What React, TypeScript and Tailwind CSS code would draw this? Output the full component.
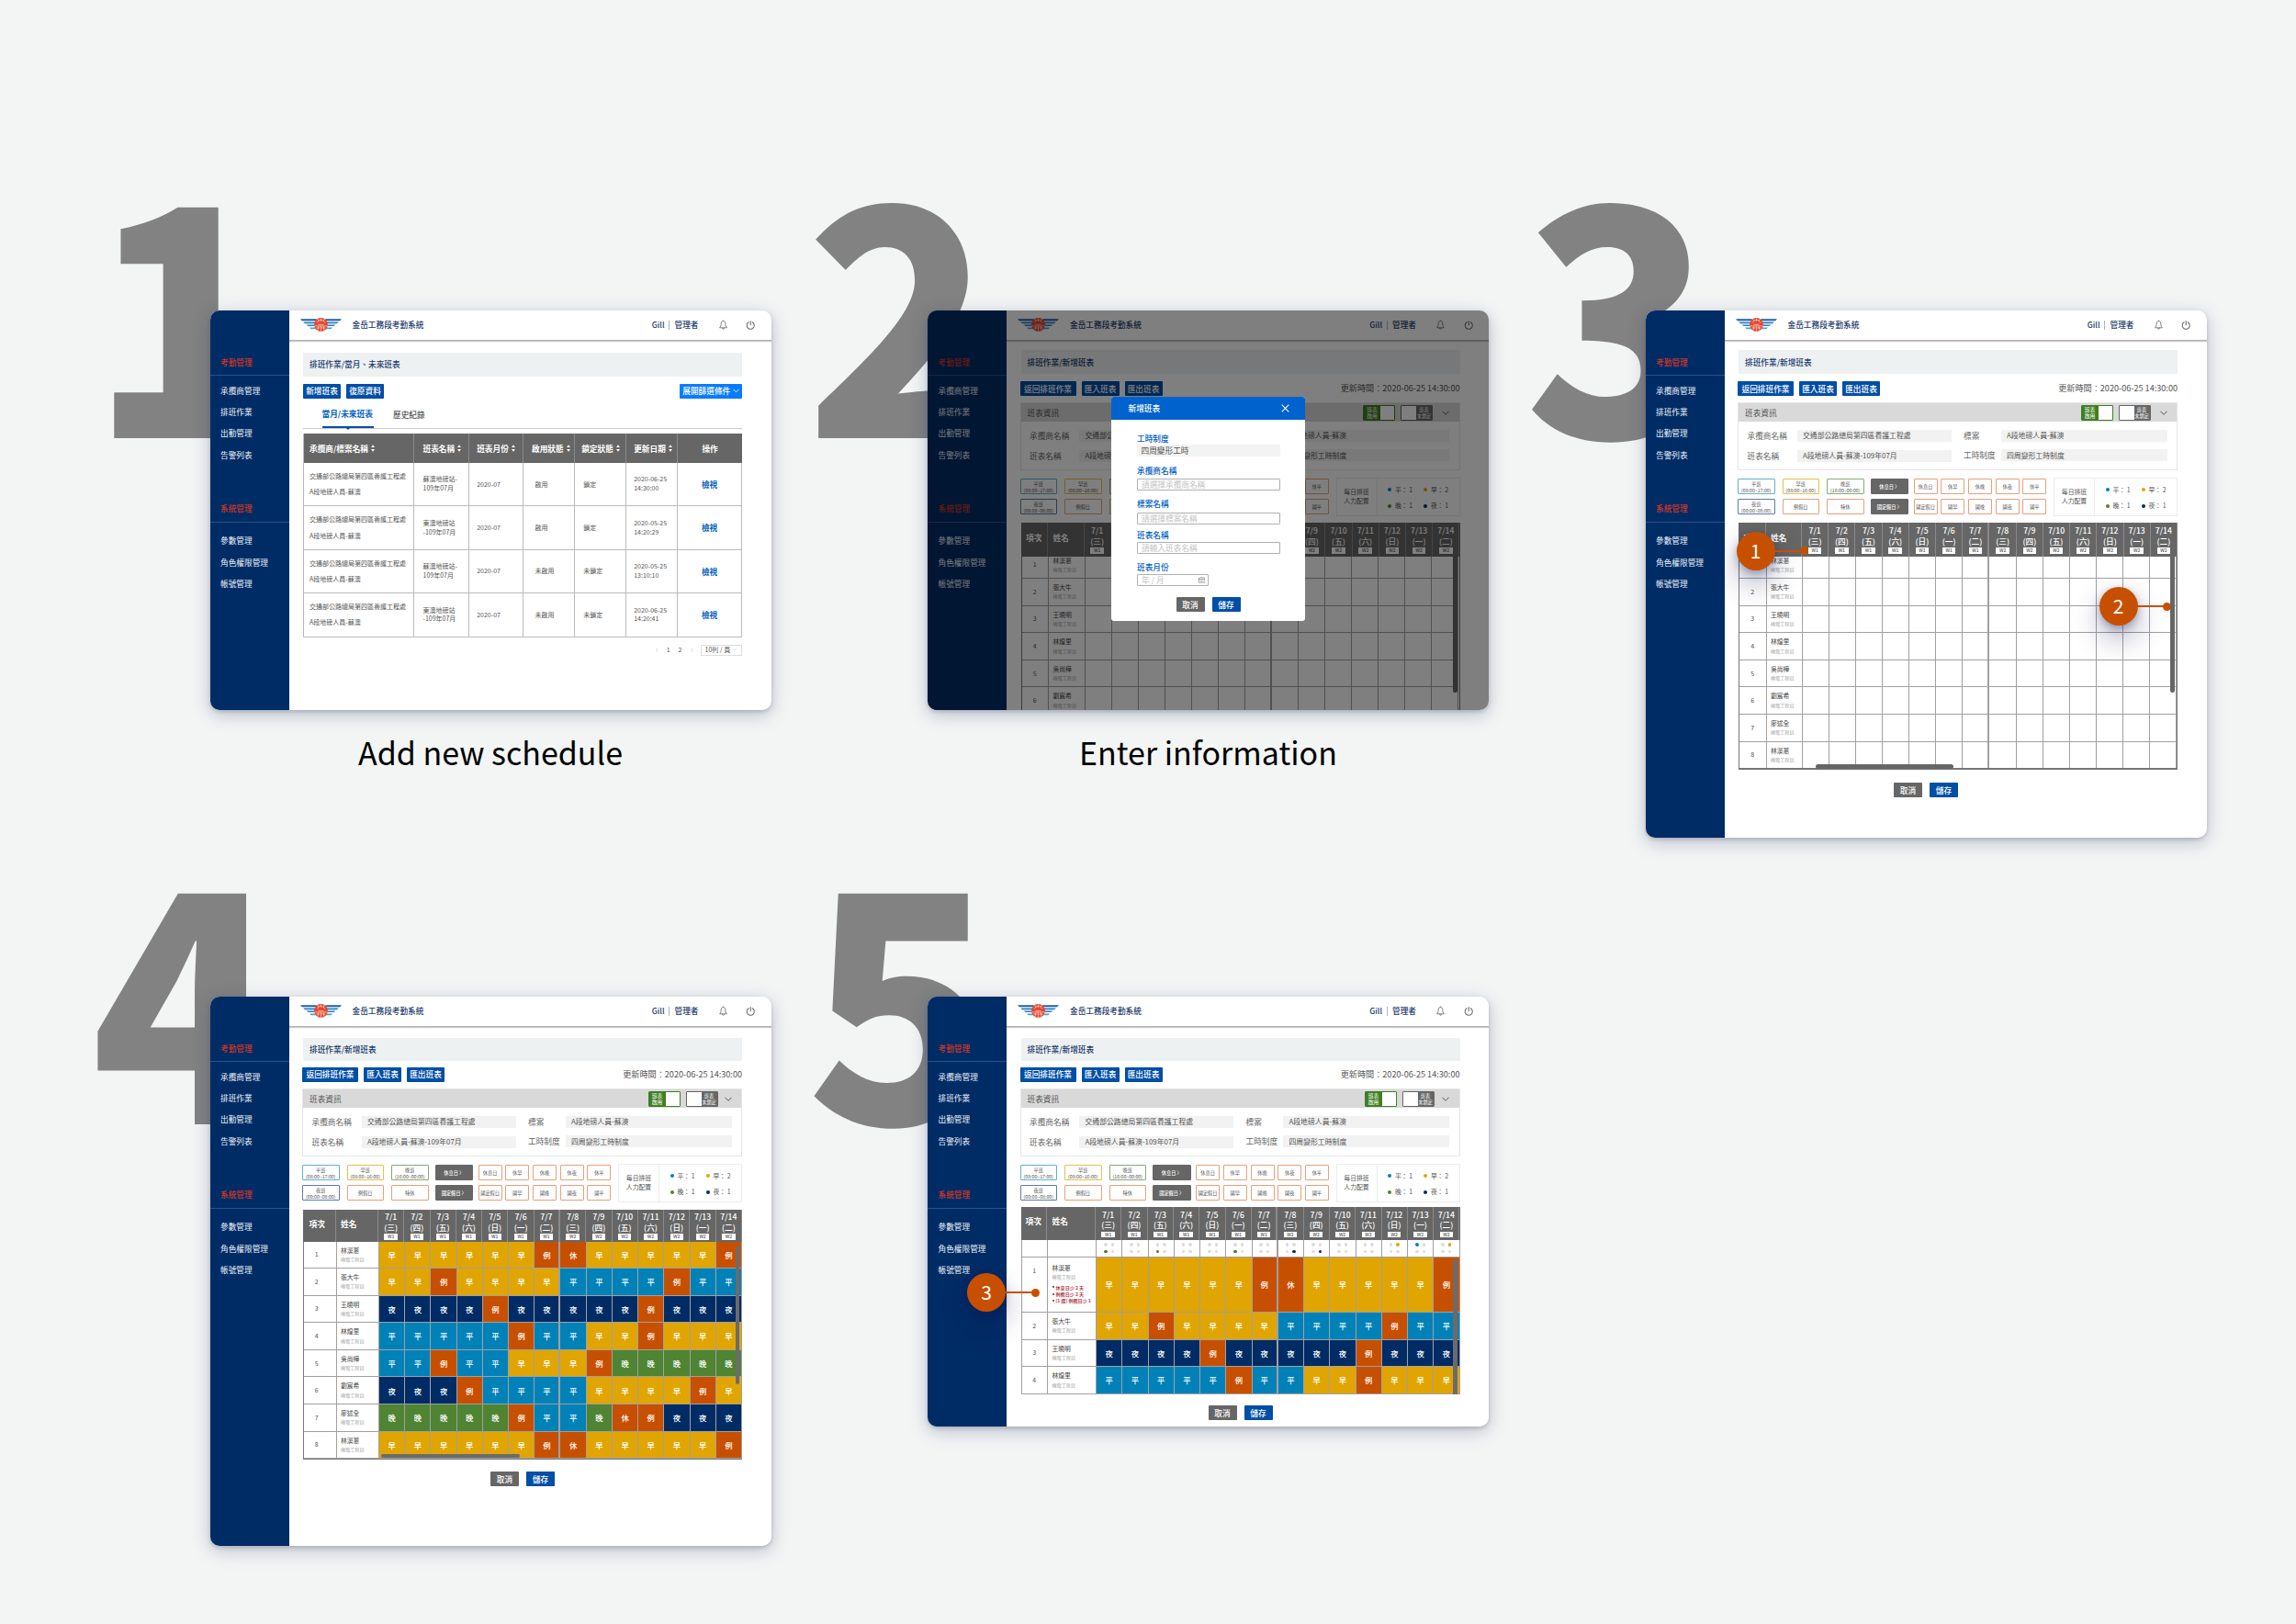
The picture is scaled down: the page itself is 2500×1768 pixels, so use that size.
import type { ReactNode } from "react";

const WEEK = ["三", "四", "五", "六", "日", "一", "二"];
const DAYS = Array.from({ length: 14 }, (_, i) => ({
  date: `7/${i + 1}`,
  day: `(${WEEK[i % 7]})`,
  week: i < 7 ? "W1" : "W2",
}));

const STAFF = ["林溪蔥", "張大牛", "王曉明", "林煌里", "吳尚樺", "劉宸希", "廖述全", "林溪蔥"];

const SHIFTS = [
  "早早早早早早例休早早早早早例",
  "早早例早早早早平平平平例平平",
  "夜夜夜夜例夜夜夜夜夜例夜夜夜",
  "平平平平平例平平早早例早早早",
  "平平例平平早早早例晚晚晚晚晚",
  "夜夜夜例平平平平早早早早例早",
  "晚晚晚晚晚例平平晚休例夜夜夜",
  "早早早早早早例休早早早早早例",
];

const SHIFT_BG: Record<string, string> = {
  早: "bg-[#e0a500]",
  例: "bg-[#c75000]",
  休: "bg-[#c75000]",
  平: "bg-[#0082b8]",
  夜: "bg-[#002c66]",
  晚: "bg-[#4f8432]",
};

/* ---------- icons ---------- */

function Logo() {
  return (
    <svg viewBox="0 0 45 15" className="h-[15px] w-[45px] shrink-0">
      <g fill="#1b5fa9">
        <path d="M0 1.300h18l-1 1.900H1.900z" />
        <path d="M45 1.300H27l1 1.900h15.100z" />
      </g>
      <g fill="#2a7cc4">
        <path d="M3.200 4.500h14l-.4 1.700H5z" />
        <path d="M41.800 4.500h-14l.4 1.700H40z" />
        <path d="M6.600 7.500h10l.3 1.600H8.500z" />
        <path d="M38.400 7.500h-10l-.3 1.600h8.400z" />
      </g>
      <g fill="#45a5e0">
        <path d="M10 10.400h7l1.300 1.900h-6.800z" />
        <path d="M35 10.400h-7l-1.300 1.900h6.800z" />
      </g>
      <circle cx="22.500" cy="7.400" r="7.400" fill="#e5472c" />
      <g stroke="#fff" strokeWidth=".55" fill="none">
        <path d="M18.200 5.500a4.500 4.500 0 0 1 8.600 0M22.500.5v3.300M18.800 1.400l1.100 1.800M26.200 1.400l-1.100 1.800" />
        <path d="M19.500 7.300h6M15.300 8.900h14.400M17.500 11h4.300M23.200 11h4.300M22.500 9v5.500M19.800 9.200l-.8 4.800M25.200 9.200l.8 4.800" />
      </g>
    </svg>
  );
}

function Bell() {
  return (
    <svg viewBox="0 0 18 22" className="h-[11px] w-[9px] shrink-0" fill="none" stroke="#6a6a6a" strokeWidth="1.700">
      <path d="M9 1.200v2M9 3c-3 0-4.600 2.300-4.600 5.200 0 5-1 6.800-3.200 9.400h15.600c-2.200-2.600-3.200-4.400-3.200-9.400C13.600 5.300 12 3 9 3z" />
      <path d="M7 18c0 3.500 4 3.500 4 0" />
    </svg>
  );
}

function Power() {
  return (
    <svg viewBox="0 0 20 20" className="h-[10.500px] w-[10.500px] shrink-0" fill="none" stroke="#6a6a6a" strokeWidth="2" strokeLinecap="round">
      <path d="M10 1.200v8" />
      <path d="M6 3.300a7.700 7.700 0 1 0 8 0" />
    </svg>
  );
}

function Chevron({ className }: { className: string }) {
  return (
    <svg viewBox="0 0 16 10" className={className} fill="none" stroke="currentColor" strokeWidth="2">
      <path d="M1 1.500l7 7 7-7" />
    </svg>
  );
}

function Sort() {
  return (
    <svg viewBox="0 0 8 16" className="ml-[3px] h-2 w-1 shrink-0" fill="#fff">
      <path d="M4 .5l4 5.500H0zM4 15.500L0 10h8z" />
    </svg>
  );
}

/* ---------- shared chrome ---------- */

function NavHeading({ children, className }: { children: ReactNode; className: string }) {
  return (
    <div className={`flex items-center border-b border-[#2b5288] pl-[11.500px] font-medium text-[#d3341f] ${className}`}>
      {children}
    </div>
  );
}

function NavItem({ children }: { children: ReactNode }) {
  return <a className="flex h-[23.200px] items-center pl-[11.500px] text-[#eef2f8]">{children}</a>;
}

function Sidebar() {
  return (
    <nav className="w-[86px] shrink-0 bg-[#002c66] pt-[42.500px]">
      <NavHeading className="h-[28.500px]">考勤管理</NavHeading>
      <div className="mt-[4.700px]">
        <NavItem>承攬商管理</NavItem>
        <NavItem>排班作業</NavItem>
        <NavItem>出勤管理</NavItem>
        <NavItem>告警列表</NavItem>
      </div>
      <NavHeading className="mt-[31.300px] h-[31.500px]">系統管理</NavHeading>
      <div className="mt-[8px]">
        <NavItem>參數管理</NavItem>
        <NavItem>角色權限管理</NavItem>
        <NavItem>帳號管理</NavItem>
      </div>
    </nav>
  );
}

function Screen({ children, className }: { children: ReactNode; className: string }) {
  return (
    <div
      className={`relative flex w-[611px] overflow-hidden rounded-[10px] bg-white text-[8.670px] leading-none text-[#555] shadow-[0_5px_20px_rgba(40,50,90,0.28),0_2px_4px_rgba(40,50,90,0.2)] ${className}`}
    >
      <Sidebar />
      <div className="flex min-w-0 flex-1 flex-col">
        <header className="flex h-[32.500px] shrink-0 items-center border-b border-[#b4b4b4] pr-[17px] pl-3 font-medium text-[#1b3a6b] shadow-[0_1px_1px_rgba(0,0,0,0.22)]">
          <Logo />
          <span className="ml-3">金岳工務段考勤系統</span>
          <span className="ml-auto">Gill</span>
          <span className="mr-[5.500px] ml-[4.500px] h-2.5 w-px bg-[#aab4c4]" />
          <span>管理者</span>
          <span className="ml-[22px] flex">
            <Bell />
          </span>
          <span className="ml-[20.500px] flex">
            <Power />
          </span>
        </header>
        <div className="ml-[15.500px] w-[478px]">{children}</div>
      </div>
    </div>
  );
}

function Crumb({ children, className }: { children: ReactNode; className: string }) {
  return (
    <div className={`flex items-center bg-[#eef1f2] pl-[7px] font-medium text-[#1b3a6b] ${className}`}>{children}</div>
  );
}

function Btn({ children, className }: { children: ReactNode; className: string }) {
  return (
    <button className={`flex h-4 items-center justify-center rounded-[1px] font-medium text-white ${className}`}>
      {children}
    </button>
  );
}

function FormButtons({ className }: { className: string }) {
  return (
    <div className={`flex gap-[8px] ${className}`}>
      <Btn className="w-[31px] bg-[#666]">取消</Btn>
      <Btn className="w-[31px] bg-[#004ea6]">儲存</Btn>
    </div>
  );
}

/* ---------- schedule editor ---------- */

function Field({ label, value, className }: { label: string; value: string; className: string }) {
  return (
    <div className={`grid items-center ${className}`}>
      <span className="text-[#666]">{label}</span>
      <span className="flex h-[13px] items-center bg-[#f2f2f2] pl-[6.500px] text-[7.850px]">{value}</span>
    </div>
  );
}

function InfoPanel({ toggles }: { toggles: string }) {
  return (
    <section className="h-[74px] border border-[#e6e6e6]">
      <div className="flex h-5 items-center justify-between bg-[#d9d9d9] pr-[10.500px] pl-[7px]">
        <span>班表資訊</span>
        <div className={`ml-auto flex ${toggles}`}>
          <div className="flex h-[17px] w-[35px] overflow-hidden rounded-[1px] border border-[#3f7f22] bg-white">
            <span className="w-[18px] bg-[#3f7f22] text-center text-[5.800px] leading-[7.500px] text-white">
              班表
              <br />
              啟用
            </span>
          </div>
          <div className="ml-[6px] flex h-[17px] w-[35px] overflow-hidden rounded-[1px] border border-[#666] bg-white">
            <span className="ml-auto w-[17px] bg-[#666] text-center text-[5.200px] leading-[7.500px] text-white">
              班表
              <br />
              未鎖定
            </span>
          </div>
        </div>
        <Chevron className="h-[5px] w-2" />
      </div>
      <div className="flex pt-[7.500px] pl-[9.500px]">
        <div className="w-[235.500px]">
          <Field className="h-[15px] grid-cols-[54px_168px]" label="承攬商名稱" value="交通部公路總局第四區養護工程處" />
          <Field className="mt-[7px] h-[15px] grid-cols-[54px_168px]" label="班表名稱" value="A段地磅人員-蘇澳-109年07月" />
        </div>
        <div>
          <Field className="h-[15px] grid-cols-[40.500px_181px]" label="標案" value="A段地磅人員-蘇澳" />
          <Field className="mt-[6.500px] h-[15px] grid-cols-[40.500px_181px]" label="工時制度" value="四周變形工時制度" />
        </div>
      </div>
    </section>
  );
}

function Chip({ children, className }: { children: ReactNode; className: string }) {
  return (
    <div
      className={`flex items-center justify-center rounded-[1px] border bg-white text-center text-[5.200px] leading-[7px] whitespace-nowrap ${className}`}
    >
      {children}
    </div>
  );
}

function Count({ dot, label }: { dot: string; label: string }) {
  return (
    <span className="flex items-center gap-[4px] whitespace-pre">
      <i className={`size-[4px] rounded-full ${dot}`} />
      {label}
    </span>
  );
}

function ShiftPalette() {
  const orange = "border-[#e6a07c]";
  return (
    <section className="flex h-[42px] justify-between">
      <div className="grid grid-cols-[40.500px_40.500px_40.500px_40.500px] grid-rows-[17px_17px] gap-x-[8px] gap-y-[5px] pt-px">
        <Chip className="border-[#5fb0d0]">平班<br />(08:00~17:00)</Chip>
        <Chip className="border-[#e6c04a]">早班<br />(08:00~16:00)</Chip>
        <Chip className="border-[#84ac70]">晚班<br />(16:00~00:00)</Chip>
        <Chip className="ml-[-1px] border-[#666] bg-[#666]! font-medium text-white">休息日 〉</Chip>
        <Chip className="border-[#5b7aa8]">夜班<br />(00:00~08:00)</Chip>
        <Chip className={orange}>例假日</Chip>
        <Chip className={orange}>特休</Chip>
        <Chip className="ml-[-1px] border-[#666] bg-[#666]! font-medium text-white">國定假日 〉</Chip>
      </div>
      <div className="-ml-[2px] grid grid-cols-[26px_26px_26px_26px_26px] grid-rows-[17.500px_17.500px] gap-x-[3.700px] gap-y-[4.500px] pt-[.5px]">
        {["休息日", "休早", "休晚", "休夜", "休平", "國定假日", "國早", "國晚", "國夜", "國平"].map((t) => (
          <Chip key={t} className={orange}>
            {t}
          </Chip>
        ))}
      </div>
      <div className="flex w-[135px] border border-[#ececec] text-[6.850px]">
        <div className="flex w-[44px] flex-col items-center justify-center border-r border-[#ececec] leading-[9.800px]">
          <span>每日排班</span>
          <span>人力配置</span>
        </div>
        <div className="grid flex-1 grid-cols-[39px_1fr] grid-rows-[17.500px_17.500px] pt-[3.500px] pl-[11.500px]">
          <Count dot="bg-[#0082b8]" label="平： 1" />
          <Count dot="bg-[#e0a500]" label="早： 2" />
          <Count dot="bg-[#4f8432]" label="晚： 1" />
          <Count dot="bg-[#002c66]" label="夜： 1" />
        </div>
      </div>
    </section>
  );
}

const line = (i: number) => (i === 6 ? "border-r-2" : "border-r");

function TableHead({ cols, className, indexPad = "" }: { cols: string; className: string; indexPad?: string }) {
  return (
    <div className={`relative z-10 grid bg-[#666] font-medium text-white ${cols} ${className}`}>
      <div className={`flex items-center justify-center border-r border-[#8a8a8a] pb-1 font-bold ${indexPad}`}>項次</div>
      <div className="flex items-center border-r border-[#8a8a8a] pb-1 pl-[5.500px] font-bold">姓名</div>
      {DAYS.map((d, i) => (
        <div key={d.date} className={`flex flex-col items-center justify-center border-[#8a8a8a] ${line(i)}`}>
          <span className="h-[11.500px] leading-[11.500px]">{d.date}</span>
          <span className="h-[10.500px] leading-[10.500px]">{d.day}</span>
          <span className="mt-[2px] h-[6.500px] w-[14.500px] bg-white text-center text-[5px] leading-[6.500px] text-[#555]">
            {d.week}
          </span>
        </div>
      ))}
    </div>
  );
}

function StaffRow({
  index,
  cols,
  filled,
  className = "h-[29.600px]",
  indexPad = "",
  warnings,
}: {
  index: number;
  cols: string;
  filled: boolean;
  className?: string;
  indexPad?: string;
  warnings?: string[];
}) {
  return (
    <div className={`grid ${cols} ${className}`}>
      <div
        className={`flex justify-center border-r border-b border-[#a0a0a0] text-[7px] ${indexPad} ${warnings ? "pt-[11px]" : "items-center"}`}
      >
        {index + 1}
      </div>
      <div
        className={`flex flex-col border-r border-b border-[#a0a0a0] pl-[4.500px] whitespace-nowrap ${warnings ? "pt-[7px]" : "justify-center"}`}
      >
        <span className="text-[6.800px] leading-[9.300px] text-[#444]">{STAFF[index]}</span>
        <span className="text-[5.100px] leading-[9.300px] text-[#aaa]">機電工程員</span>
        {warnings && (
          <ul className="mt-[3.500px] text-[5.100px] leading-[7.300px] font-medium text-[#a3121f]">
            {warnings.map((w) => (
              <li key={w} className="flex items-center gap-[2px]">
                <i className="size-[2px] rounded-full bg-[#a3121f]" />
                {w}
              </li>
            ))}
          </ul>
        )}
      </div>
      {[...SHIFTS[index]].map((s, i) => (
        <div
          key={i}
          className={`flex items-center justify-center border-b border-[#a0a0a0] text-[8.300px] font-medium text-white ${line(i)} ${filled ? SHIFT_BG[s] : ""}`}
        >
          {filled ? s : ""}
        </div>
      ))}
    </div>
  );
}

/* Headcount markers shown under each date: positions run left-right, top-bottom. */
const MARKS: Record<number, [number, string]> = {
  0: [2, "bg-[#3f7f22]"],
  2: [2, "bg-[#3f7f22]"],
  5: [2, "bg-[#3f7f22]"],
  7: [3, "bg-[#002c66]"],
  8: [3, "bg-[#002c66]"],
  11: [1, "bg-[#e0a500]"],
  12: [0, "bg-[#0082b8]"],
  13: [1, "bg-[#e0a500]"],
};

function HeadcountRow({ cols }: { cols: string }) {
  return (
    <div className={`grid h-[19px] ${cols}`}>
      <div className="border-r border-b border-[#a0a0a0]" />
      <div className="border-r border-b border-[#a0a0a0]" />
      {DAYS.map((d, i) => (
        <div
          key={d.date}
          className={`grid grid-cols-[3.600px_3.600px] content-center justify-center gap-[4px] border-b border-[#a0a0a0] ${line(i)}`}
        >
          {[0, 1, 2, 3].map((k) => (
            <i
              key={k}
              className={`size-[3.600px] rounded-full ${MARKS[i] && MARKS[i][0] === k ? MARKS[i][1] : "bg-[#dcdcdc]"}`}
            />
          ))}
        </div>
      ))}
    </div>
  );
}

function EditorTop({
  crumb,
  toolbar,
  gap,
  toggles = "mr-[10px]",
}: {
  crumb: string;
  toolbar: string;
  gap: string;
  toggles?: string;
}) {
  return (
    <>
      <Crumb className={crumb}>排班作業/新增班表</Crumb>
      <div className={`flex h-4 items-center gap-[6px] ${toolbar}`}>
        <Btn className="-ml-px w-[61px] bg-[#004ea6]">返回排班作業</Btn>
        <Btn className="w-[41px] bg-[#004ea6]">匯入班表</Btn>
        <Btn className="w-[41px] bg-[#004ea6]">匯出班表</Btn>
        <span className="ml-auto text-[9.120px]">更新時間：2020-06-25 14:30:00</span>
      </div>
      <div className={`-ml-px w-[479px] ${gap}`}>
        <InfoPanel toggles={toggles} />
        <div className="h-2" />
        <ShiftPalette />
      </div>
    </>
  );
}

const EMPTY_COLS = "grid-cols-[29.500px_39.500px_repeat(14,minmax(0,1fr))]";
const FULL_COLS = "grid-cols-[35.500px_46.500px_repeat(14,minmax(0,1fr))]";
const WARN_COLS = "grid-cols-[28.500px_53px_repeat(14,minmax(0,1fr))]";

function EmptyEditor({ children, className }: { children?: ReactNode; className: string }) {
  return (
    <Screen className={className}>
      <EditorTop crumb="mt-[10.500px] h-[26px]" toolbar="mt-2" gap="mt-[7px]" />
      <div className="relative mt-[7px] h-[269px]">
        <TableHead cols={EMPTY_COLS} className="h-[36.500px]" />
        <div className="h-[232.500px] overflow-hidden border-x border-b-2 border-[#777]">
          <div className="-mt-[5px]">
            {STAFF.map((_, i) => (
              <StaffRow key={i} index={i} cols={EMPTY_COLS} filled={false} />
            ))}
          </div>
        </div>
        <div className="absolute top-[36.500px] right-[3px] h-[148px] w-[5px] rounded-b-full bg-[#666]" />
        <div className="absolute top-[263px] left-[84px] h-[5px] w-[150px] rounded-full bg-[#666]" />
      </div>
      <FormButtons className="mt-[14px] ml-[169px]" />
      {children}
    </Screen>
  );
}

/* ---------- screen 1: list ---------- */

const LIST_ROWS = [
  ["蘇澳地磅站-", "109年07月", "啟用", "鎖定", "2020-06-25", "14:30:00"],
  ["東澳地磅站", "-109年07月", "啟用", "鎖定", "2020-05-25", "14:20:29"],
  ["蘇澳地磅站-", "109年07月", "未啟用", "未鎖定", "2020-05-25", "13:10:10"],
  ["東澳地磅站", "-109年07月", "未啟用", "未鎖定", "2020-06-25", "14:20:41"],
];

const LIST_COLS = "grid-cols-[119.500px_60.700px_58.800px_56.200px_56px_56px_1fr]";

function ListScreen() {
  const cell = "flex flex-col justify-center border-r border-b border-[#bbb]";
  const head = "flex items-center border-r border-[#8a8a8a]";
  return (
    <Screen className="h-[435px]">
      <Crumb className="mt-[13.500px] h-[25.500px]">排班作業/當月、未來班表</Crumb>
      <div className="mt-[8px] flex gap-[6px]">
        <Btn className="w-[41px] bg-[#004ea6]">新增班表</Btn>
        <Btn className="w-[41px] bg-[#004ea6]">復原資料</Btn>
        <Btn className="ml-auto w-[68px] gap-[2.500px] bg-[#087cff]">
          展開篩選條件
          <Chevron className="h-[4.500px] w-[7px]" />
        </Btn>
      </div>
      <div className="mt-[8px] flex h-[25px] gap-[21px] border-b border-[#ccc] pl-[20.500px]">
        <div className="relative flex w-[56.500px] items-center border-b-2 border-[#004ea6] pb-1 font-bold text-[#0060c0]">
          當月/未來班表
          <span className="absolute top-[23.500px] left-[25px] h-0 w-0 border-x-[3px] border-t-[3px] border-x-transparent border-t-[#004ea6]" />
        </div>
        <div className="flex items-center pb-[5px] font-medium">歷史紀錄</div>
      </div>
      <div className="mt-[5.500px] border-l border-[#bbb]">
        <div className={`grid h-[32px] bg-[#666] font-bold text-white ${LIST_COLS}`}>
          <div className={`${head} pl-[6px]`}>承攬商/標案名稱<Sort /></div>
          <div className={`${head} pl-[10px]`}>班表名稱<Sort /></div>
          <div className={`${head} pl-[8px]`}>班表月份<Sort /></div>
          <div className={`${head} pl-[9px]`}>啟用狀態<Sort /></div>
          <div className={`${head} pl-[7px]`}>鎖定狀態<Sort /></div>
          <div className={`${head} pl-[8px]`}>更新日期<Sort /></div>
          <div className="flex items-center justify-center">操作</div>
        </div>
        {LIST_ROWS.map((r, i) => (
          <div key={i} className={`grid h-[47.400px] text-[7px] ${LIST_COLS}`}>
            <div className={`${cell} pl-[6px] leading-[17.300px]`}>
              <span>交通部公路總局第四區養護工程處</span>
              <span>A段地磅人員-蘇澳</span>
            </div>
            <div className={`${cell} pl-[10px] leading-[9.800px] whitespace-nowrap`}>
              <span>{r[0]}</span>
              <span>{r[1]}</span>
            </div>
            <div className={`${cell} pl-[8px]`}>2020-07</div>
            <div className={`${cell} pl-[12.500px]`}>{r[2]}</div>
            <div className={`${cell} pl-[9px]`}>{r[3]}</div>
            <div className={`${cell} pl-[8px] leading-[9.800px]`}>
              <span>{r[4]}</span>
              <span>{r[5]}</span>
            </div>
            <div className={`${cell} items-center text-[8.670px] font-bold text-[#0060c0]`}>檢視</div>
          </div>
        ))}
      </div>
      <div className="mt-[8px] flex h-[12px] items-center justify-end text-[7px]">
        <Chevron className="mr-[8px] h-[3px] w-[5px] rotate-90 text-[#bbb]" />
        <span>1</span>
        <span className="ml-[9px]">2</span>
        <Chevron className="mr-[7px] ml-[8px] h-[3px] w-[5px] -rotate-90 text-[#bbb]" />
        <span className="flex h-full w-[45.500px] items-center gap-[3px] border border-[#ddd] pl-[4px] whitespace-nowrap">
          10列 / 頁
          <Chevron className="h-[2.500px] w-[4px] text-[#bbb]" />
        </span>
      </div>
    </Screen>
  );
}

/* ---------- screen 2: dialog ---------- */

function DialogField({ label, placeholder, className }: { label: string; placeholder: string; className: string }) {
  return (
    <label className={`flex flex-col ${className}`}>
      <span className="font-medium text-[#0060c0]">{label}</span>
      <span className="mt-auto flex h-[13px] items-center rounded-[1px] border border-[#b0b0b0] pl-[4px] text-[#c4c4c4]">
        {placeholder}
      </span>
    </label>
  );
}

function Dialog() {
  return (
    <div className="absolute inset-0 z-20 bg-black/50">
      <div className="absolute top-[94px] left-[200px] h-[244px] w-[210.500px] overflow-hidden rounded-[3px] bg-white">
        <div className="flex h-[25px] items-center justify-between bg-[#0062cc] pr-[17px] pl-[18.500px] font-medium text-white">
          新增班表
          <svg viewBox="0 0 10 10" className="size-[9px]" stroke="#fff" strokeWidth="1.200">
            <path d="M.8.8l8.400 8.400M9.200.8L.8 9.200" />
          </svg>
        </div>
        <div className="ml-[28px] w-[156px]">
          <div className="pt-[15.500px] font-medium text-[#0060c0]">工時制度</div>
          <div className="mt-[3px] flex h-[12.500px] items-center bg-[#f3f3f3] pl-[4.500px]">四周變形工時</div>
          <DialogField className="mt-[11.500px] h-[26px]" label="承攬商名稱" placeholder="請選擇承攬商名稱" />
          <DialogField className="mt-[9.500px] h-[27.500px]" label="標案名稱" placeholder="請選擇標案名稱" />
          <DialogField className="mt-[7px] h-[25px]" label="班表名稱" placeholder="請輸入班表名稱" />
          <div className="mt-[10px] font-medium text-[#0060c0]">班表月份</div>
          <div className="mt-[3px] flex h-[13px] w-[78px] items-center justify-between rounded-[1px] border border-[#b0b0b0] pr-[3px] pl-[4px] text-[#c4c4c4]">
            年 / 月
            <svg viewBox="0 0 14 14" className="size-[7.500px]" fill="none" stroke="#777" strokeWidth="1.300">
              <rect x="1" y="1.500" width="12" height="11.500" rx="2" />
              <path d="M1 4.800h12M4 8h1.500M6.300 8h1.500M8.600 8h1.500M4 10.300h1.500M6.300 10.300h1.500M8.600 10.300h1.500" />
            </svg>
          </div>
        </div>
        <FormButtons className="mt-[12px] ml-[70.500px]" />
      </div>
    </div>
  );
}

/* ---------- screens 4 and 5 ---------- */

function FilledEditor() {
  return (
    <Screen className="h-[598px]">
      <EditorTop crumb="mt-[12px] h-[25px]" toolbar="mt-[7px]" gap="mt-[7.500px]" toggles="mr-[7px]" />
      <div className="relative mt-[8px]">
        <TableHead cols={FULL_COLS} className="h-[34.500px]" indexPad="pr-[4px]" />
        <div className="h-[237px] overflow-hidden border-b border-l border-[#777]">
          {STAFF.map((_, i) => (
            <StaffRow key={i} index={i} cols={FULL_COLS} filled indexPad="pr-[7px]" />
          ))}
        </div>
        <div className="absolute top-[39px] right-[3px] h-[151px] w-[4.500px] rounded-full bg-[#6b6b6b]" />
        <div className="absolute top-[265.500px] left-[85px] h-[4.500px] w-[150.500px] rounded-full bg-[#6b6b6b]" />
      </div>
      <FormButtons className="mt-[13.500px] ml-[204px]" />
    </Screen>
  );
}

function WarningEditor() {
  return (
    <Screen className="h-[468px]">
      <EditorTop crumb="mt-[12px] h-[25px]" toolbar="mt-[7px]" gap="mt-[7.500px]" toggles="mr-[8.500px]" />
      <div className="relative mt-[5px]">
        <TableHead cols={WARN_COLS} className="h-[35.500px]" />
        <div className="border-l border-[#a0a0a0]">
          <HeadcountRow cols={WARN_COLS} />
          <StaffRow
            index={0}
            cols={WARN_COLS}
            filled
            className="h-[60.600px]"
            warnings={["休息日少 2 天", "例假日少 2 天", "(1 週) 例假日少 1"]}
          />
          {[1, 2, 3].map((i) => (
            <StaffRow key={i} index={i} cols={WARN_COLS} filled />
          ))}
        </div>
        <div className="absolute top-[57px] right-[2.500px] bottom-0 w-[5px] rounded-t-full bg-[#6b6b6b]" />
      </div>
      <FormButtons className="mt-[12px] ml-[204px]" />
    </Screen>
  );
}

/* ---------- board ---------- */

function Callout({ n, className }: { n: number; className: string }) {
  return (
    <div
      className={`absolute z-20 flex size-[42px] items-center justify-center rounded-full bg-[#c75000] pb-px text-[21px] leading-none text-white shadow-[0_14px_30px_rgba(20,20,80,0.35),0_3px_8px_rgba(20,20,80,0.3)] ${className}`}
    >
      {n}
      <span className="absolute top-[20px] left-[41px] h-[2px] w-[32px] bg-[#c75000]" />
      <span className="absolute top-[16.500px] left-[69.500px] size-[9px] rounded-full bg-[#c75000]" />
    </div>
  );
}

function Step({ n, digit, caption, children }: { n: number; digit: string; caption?: string; children: ReactNode }) {
  return (
    <section className="relative">
      <span
        className={`absolute top-[-184px] origin-left scale-x-[0.975] text-[346px] leading-none font-black text-[#828282] ${digit}`}
      >
        {n}
      </span>
      {children}
      {caption && <p className="mt-[23px] text-center text-[34px] leading-[46px] text-black">{caption}</p>}
    </section>
  );
}

export default function App() {
  return (
    <main className="grid h-[1768px] w-[2500px] grid-cols-[611px_611px_611px] grid-rows-[747px_1fr] items-start gap-x-[170.500px] overflow-hidden bg-[#f3f5f5] pt-[338px] pl-[228.500px] font-['Noto_Sans_CJK_TC','Noto_Sans_CJK_SC',sans-serif]">
      <Step n={1} digit="left-[-131px]" caption="Add new schedule">
        <ListScreen />
      </Step>
      <Step n={2} digit="left-[-133px]" caption="Enter information">
        <EmptyEditor className="h-[435px]">
          <Dialog />
        </EmptyEditor>
      </Step>
      <Step n={3} digit="left-[-132px]">
        <EmptyEditor className="h-[573.500px]" />
        <Callout n={1} className="top-[240.500px] left-[99px]" />
        <Callout n={2} className="top-[301px] left-[494px]" />
      </Step>
      <Step n={4} digit="left-[-130px]">
        <FilledEditor />
      </Step>
      <Step n={5} digit="left-[-132px]">
        <WarningEditor />
        <Callout n={3} className="top-[301px] left-[43px]" />
      </Step>
    </main>
  );
}
